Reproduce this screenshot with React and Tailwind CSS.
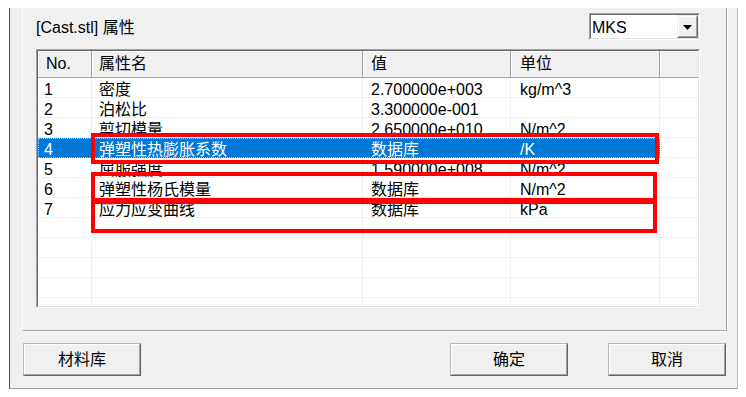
import React from "react";

const rows = [
  ["1", "密度", "2.700000e+003", "kg/m^3"],
  ["2", "泊松比", "3.300000e-001", ""],
  ["3", "剪切模量", "2.650000e+010", "N/m^2"],
  ["4", "弹塑性热膨胀系数", "数据库", "/K"],
  ["5", "屈服强度", "1.590000e+008", "N/m^2"],
  ["6", "弹塑性杨氏模量", "数据库", "N/m^2"],
  ["7", "应力应变曲线", "数据库", "kPa"],
  ["", "", "", ""],
  ["", "", "", ""],
  ["", "", "", ""],
  ["", "", "", ""],
  ["", "", "", ""],
];

function Button({ children, className = "" }) {
  return (
    <div
      className={
        "h-[33px] w-[118px] border border-t-[#b9b9b9] border-l-[#b9b9b9] border-r-[#646464] border-b-[#646464] " +
        className
      }
    >
      <div className="h-full w-full border border-t-white border-l-white border-r-[#a0a0a0] border-b-[#a0a0a0] bg-[#f0f0f0] flex items-center justify-center leading-[20px]">
        {children}
      </div>
    </div>
  );
}

export default function App() {
  return (
    <div className="relative w-[746px] h-[397px] bg-white pl-[9px] pt-[8px] overflow-hidden text-[16px] text-black font-['Liberation_Sans','Noto_Sans_CJK_SC',sans-serif]">
      <div className="w-[729px] h-[381px] bg-[#f0f0f0] border-l border-l-[#55524a] border-r border-r-[#bdbdbd] border-b border-b-[#a0a0a0] flex flex-col">
        {/* group box */}
        <div className="ml-[12px] w-[705px] h-[323px] border-l border-l-white border-r border-r-[#a0a0a0] border-b border-b-[#a0a0a0] shadow-[1px_1px_0_#ffffff] pl-[13px]">
          <div className="w-[664px] flex flex-col">
            {/* top row */}
            <div className="h-[41px] flex justify-between items-start">
              <div className="mt-[10px] leading-[20px] whitespace-nowrap">[Cast.stl] 属性</div>
              <div className="mt-[5px] w-[111px] h-[27px] border border-t-[#a0a0a0] border-l-[#a0a0a0] border-r-white border-b-white">
                <div className="h-full w-full border border-t-[#696969] border-l-[#696969] border-r-[#e3e3e3] border-b-[#e3e3e3] bg-white flex">
                  <div className="flex-1 pl-[1px] pt-[3px] leading-[20px]">MKS</div>
                  <div className="w-[21px] h-full border border-t-[#f0f0f0] border-l-[#f0f0f0] border-r-[#696969] border-b-[#696969]">
                    <div className="h-full w-full border border-t-white border-l-white border-r-[#a0a0a0] border-b-[#a0a0a0] bg-[#f0f0f0] flex items-center justify-center pt-[2px]">
                      <svg width="9" height="5" viewBox="0 0 9 5">
                        <polygon points="0,0 9,0 4.5,5" fill="#000" />
                      </svg>
                    </div>
                  </div>
                </div>
              </div>
            </div>
            {/* list view */}
            <div className="h-[259px] border border-t-[#a0a0a0] border-l-[#a0a0a0] border-r-white border-b-white">
              <div className="h-full w-full border border-t-[#696969] border-l-[#696969] border-r-[#e3e3e3] border-b-[#e3e3e3] bg-white overflow-hidden">
                {/* header */}
                <div className="flex h-[27px] leading-[26px] bg-[#f0f0f0] border-b border-b-[#a0a0a0]">
                  <div className="w-[54px] pl-[8px] border-r border-r-[#a0a0a0] shadow-[inset_1px_1px_0_#fff]">No.</div>
                  <div className="w-[271px] pl-[7px] border-r border-r-[#a0a0a0] shadow-[inset_1px_1px_0_#fff]">属性名</div>
                  <div className="w-[148px] pl-[8px] border-r border-r-[#a0a0a0] shadow-[inset_1px_1px_0_#fff]">值</div>
                  <div className="w-[149px] pl-[9px] border-r border-r-[#a0a0a0] shadow-[inset_1px_1px_0_#fff]">单位</div>
                  <div className="flex-1 shadow-[inset_1px_1px_0_#fff]"></div>
                </div>
                {/* rows */}
                {rows.map((r, i) => {
                  const sel = i === 3;
                  return (
                    <div key={i} className="flex h-[20px]">
                      <div
                        className={
                          "flex w-[622px] h-[20px] " +
                          (sel
                            ? "bg-[#0078d7] text-white outline-1 outline-dotted outline-[#9cc6ee] -outline-offset-1"
                            : "")
                        }
                      >
                        <div className={"w-[54px] pl-[6px] pt-[2px] leading-[20px] whitespace-nowrap " + (sel ? "" : "border-r border-r-[#f0f0f0] border-b border-b-[#f0f0f0]")}>{r[0]}</div>
                        <div className={"w-[271px] pl-[7px] pt-[2px] leading-[20px] whitespace-nowrap " + (sel ? "" : "border-r border-r-[#f0f0f0] border-b border-b-[#f0f0f0]")}>{r[1]}</div>
                        <div className={"w-[148px] pl-[8px] pt-[2px] leading-[20px] whitespace-nowrap " + (sel ? "" : "border-r border-r-[#f0f0f0] border-b border-b-[#f0f0f0]")}>{r[2]}</div>
                        <div className={"w-[149px] pl-[9px] pt-[2px] leading-[20px] whitespace-nowrap " + (sel ? "" : "border-r border-r-[#f0f0f0] border-b border-b-[#f0f0f0]")}>{r[3]}</div>
                      </div>
                      <div className="flex-1 h-[20px] border-b border-b-[#f0f0f0]"></div>
                    </div>
                  );
                })}
              </div>
            </div>
          </div>
        </div>
        {/* buttons */}
        <div className="mt-[12px] flex pl-[13px] pr-[11px]">
          <Button>材料库</Button>
          <Button className="ml-auto">确定</Button>
          <Button className="ml-[40px]">取消</Button>
        </div>
      </div>

      {/* red annotation boxes */}
      <div className="absolute left-[91px] top-[133px] w-[568px] h-[31px] border-[4px] border-[#ff0000]"></div>
      <div className="absolute left-[91px] top-[172px] w-[566px] h-[30px] border-[4px] border-[#ff0000]"></div>
      <div className="absolute left-[91px] top-[200px] w-[566px] h-[33px] border-[4px] border-[#ff0000]"></div>
    </div>
  );
}
